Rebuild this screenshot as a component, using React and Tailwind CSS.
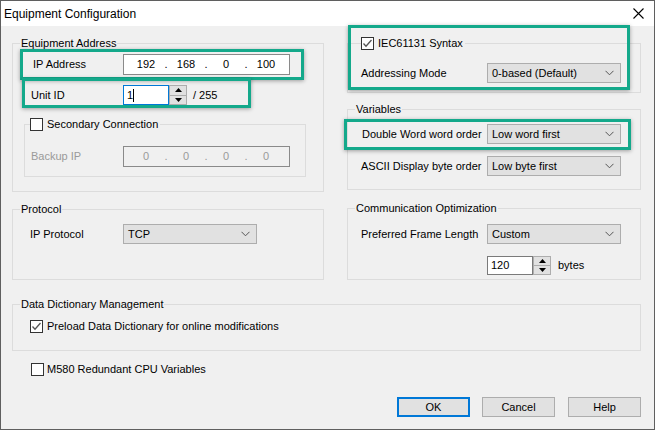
import React from 'react';

const Chevron = () => (
  <svg width="9" height="6" viewBox="0 0 9 6" className="shrink-0">
    <polyline points="0.5,0.8 4.5,4.8 8.5,0.8" fill="none" stroke="#555" strokeWidth="1" />
  </svg>
);

const Combo = ({ value, w = 'w-[134px]' }) => (
  <div className={`${w} h-[20px] bg-[#e1e1e1] border border-[#adadad] flex items-center justify-between pl-[4px] pr-[6px]`}>
    <span>{value}</span>
    <Chevron />
  </div>
);

const Check = ({ checked }) => (
  <div className="w-[13px] h-[13px] bg-white border border-[#333] flex items-center justify-center shrink-0">
    {checked && (
      <svg width="11" height="11" viewBox="0 0 11 11">
        <polyline points="1.5,5.5 4,8.2 9.5,2" fill="none" stroke="#555" strokeWidth="1.3" />
      </svg>
    )}
  </div>
);

const Spinner = () => (
  <div className="w-[18px] h-full bg-[#e1e1e1] border border-[#adadad] flex flex-col">
    <div className="flex-1 flex items-center justify-center border-b border-[#adadad]">
      <svg width="7" height="4" viewBox="0 0 7 4"><polygon points="0,4 3.5,0 7,4" fill="#000" /></svg>
    </div>
    <div className="flex-1 flex items-center justify-center">
      <svg width="7" height="4" viewBox="0 0 7 4"><polygon points="0,0 3.5,4 7,0" fill="#000" /></svg>
    </div>
  </div>
);

const IpField = ({ parts, disabled }) => (
  <div className={`w-[167px] h-[21px] border border-[#8a8a8a] flex items-center pl-[5px] ${disabled ? 'bg-[#f0f0f0] text-[#9a9a9a]' : 'bg-white text-black'}`}>
    {parts.map((p, i) => (
      <React.Fragment key={i}>
        {i > 0 && <span className="w-[6px] text-center">.</span>}
        <span className="w-[34px] text-center">{p}</span>
      </React.Fragment>
    ))}
  </div>
);

const Legend = ({ children }) => (
  <legend className="ml-[7px] px-[1px] leading-[14px]">{children}</legend>
);

const Highlight = ({ className }) => (
  <div className={`absolute border-[3px] border-[#14a98b] shadow-[0_1px_4px_rgba(0,0,0,0.35)] pointer-events-none ${className}`} />
);

export default function App() {
  return (
    <div className="relative w-[655px] h-[430px] bg-[#f0f0f0] border border-[#5f5f5f] font-['Liberation_Sans',Arial,sans-serif] text-[11px] text-black overflow-hidden flex flex-col">
      {/* title bar */}
      <div className="h-[25px] bg-white flex items-center justify-between pl-[3px] pr-[10px] shrink-0">
        <span className="text-[12px]">Equipment Configuration</span>
        <svg width="11" height="11" viewBox="0 0 11 11">
          <path d="M0.5 0.5 L10.5 10.5 M10.5 0.5 L0.5 10.5" stroke="#000" strokeWidth="1.1" />
        </svg>
      </div>

      <div className="flex-1 pl-[11px] pt-[10px] flex flex-col">
        <div className="flex gap-[23px]">
          {/* left column */}
          <div className="w-[312px] flex flex-col">
            <fieldset className="h-[156px] border border-[#dcdcdc]">
              <Legend>Equipment Address</Legend>
              <div className="mt-[4px] h-[21px] flex items-center">
                <span className="ml-[20px] w-[90px]">IP Address</span>
                <IpField parts={['192', '168', '0', '100']} />
              </div>
              <div className="mt-[10px] h-[20px] flex items-center">
                <span className="ml-[18px] w-[92px]">Unit ID</span>
                <div className="w-[46px] h-full bg-white border border-[#0078d7] flex items-center pl-[3px]">
                  <span>1</span>
                  <span className="w-[1px] h-[13px] bg-black" />
                </div>
                <Spinner />
                <span className="ml-[6px]">/ 255</span>
              </div>
              <fieldset className="mt-[12px] ml-[11px] w-[282px] h-[60px] border border-[#dcdcdc]">
                <legend className="ml-[5px] pr-[2px] h-[14px] flex items-center">
                  <Check />
                  <span className="ml-[4px]">Secondary Connection</span>
                </legend>
                <div className="mt-[15px] h-[21px] flex items-center">
                  <span className="ml-[6px] w-[92px] text-[#9a9a9a]">Backup IP</span>
                  <IpField parts={['0', '0', '0', '0']} disabled />
                </div>
              </fieldset>
            </fieldset>

            <fieldset className="mt-[10px] h-[78px] border border-[#dcdcdc]">
              <Legend>Protocol</Legend>
              <div className="mt-[8px] h-[20px] flex items-center">
                <span className="ml-[17px] w-[93px]">IP Protocol</span>
                <Combo value="TCP" />
              </div>
            </fieldset>
          </div>

          {/* right column */}
          <div className="w-[294px] flex flex-col">
            <fieldset className="h-[57px] border border-[#dcdcdc]">
              <legend className="ml-[13px] pr-[2px] h-[14px] flex items-center">
                <Check checked />
                <span className="ml-[4px]">IEC61131 Syntax</span>
              </legend>
              <div className="mt-[13px] h-[20px] flex items-center">
                <span className="ml-[13px] w-[126px]">Addressing Mode</span>
                <Combo value="0-based (Default)" />
              </div>
            </fieldset>

            <fieldset className="mt-[9px] h-[88px] border border-[#dcdcdc]">
              <Legend>Variables</Legend>
              <div className="mt-[8px] h-[20px] flex items-center">
                <span className="ml-[14px] w-[125px]">Double Word word order</span>
                <Combo value="Low word first" />
              </div>
              <div className="mt-[12px] h-[20px] flex items-center">
                <span className="ml-[13px] w-[126px]">ASCII Display byte order</span>
                <Combo value="Low byte first" />
              </div>
            </fieldset>

            <fieldset className="mt-[11px] h-[79px] border border-[#dcdcdc]">
              <Legend>Communication Optimization</Legend>
              <div className="mt-[9px] h-[20px] flex items-center">
                <span className="ml-[13px] w-[126px]">Preferred Frame Length</span>
                <Combo value="Custom" />
              </div>
              <div className="mt-[12px] h-[19px] flex items-center">
                <div className="ml-[139px] w-[46px] h-full bg-white border border-[#7a7a7a] flex items-center pl-[3px]">120</div>
                <Spinner />
                <span className="ml-[7px]">bytes</span>
              </div>
            </fieldset>
          </div>
        </div>

        <fieldset className="mt-[17px] w-[629px] h-[54px] border border-[#dcdcdc]">
          <Legend>Data Dictionary Management</Legend>
          <div className="mt-[9px] h-[13px] leading-[13px] flex items-center">
            <span className="ml-[17px]"><Check checked /></span>
            <span className="ml-[4px]">Preload Data Dictionary for online modifications</span>
          </div>
        </fieldset>

        <div className="mt-[12px] h-[13px] leading-[13px] flex items-center">
          <span className="ml-[19px]"><Check /></span>
          <span className="ml-[3px]">M580 Redundant CPU Variables</span>
        </div>

        <div className="mt-[21px] ml-[385px] flex gap-[12px]">
          <button className="w-[73px] h-[20px] bg-[#e1e1e1] border-2 border-[#0078d7]">OK</button>
          <button className="w-[73px] h-[20px] bg-[#e1e1e1] border border-[#adadad]">Cancel</button>
          <button className="w-[73px] h-[20px] bg-[#e1e1e1] border border-[#adadad] ml-[1px]">Help</button>
        </div>
      </div>

      <Highlight className="left-[19px] top-[48px] w-[284px] h-[31px]" />
      <Highlight className="left-[21px] top-[77px] w-[229px] h-[30px]" />
      <Highlight className="left-[347px] top-[24px] w-[282px] h-[65px]" />
      <Highlight className="left-[343px] top-[118px] w-[287px] h-[31px]" />
    </div>
  );
}
